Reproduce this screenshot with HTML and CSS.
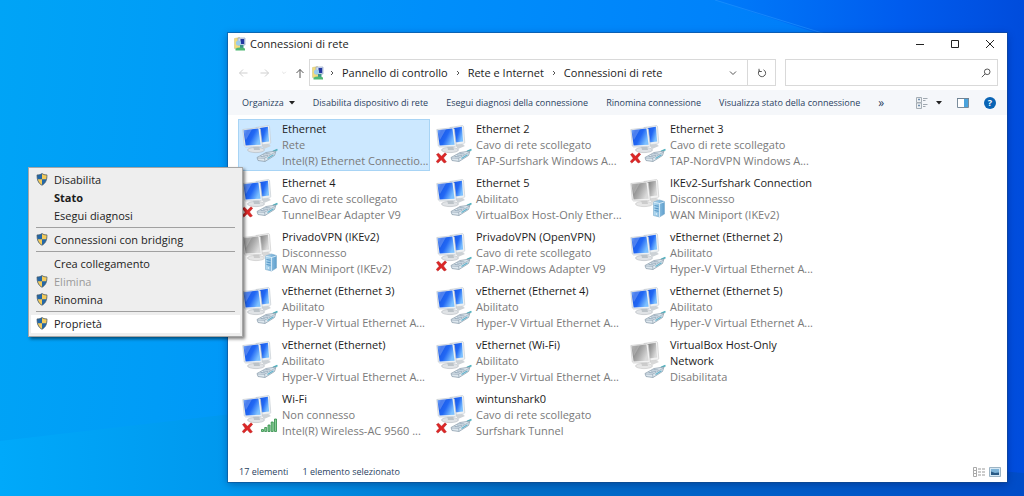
FILE: index.html
```html
<!DOCTYPE html>
<html lang="it">
<head>
<meta charset="utf-8">
<title>Connessioni di rete</title>
<link rel="stylesheet" href="styles.css">
</head>
<body>
<svg class="defs" aria-hidden="true">
  <defs>
    <linearGradient id="g-blue" x1="0" y1="0" x2="1" y2=".5"><stop offset="0" stop-color="#4d92fa"/><stop offset=".25" stop-color="#1a5ae8"/><stop offset=".6" stop-color="#2268f4"/><stop offset="1" stop-color="#7cc0ff"/></linearGradient>
    <linearGradient id="g-gray" x1="0" y1="0" x2="1" y2=".5"><stop offset="0" stop-color="#a5a5a5"/><stop offset=".3" stop-color="#8c8c8c"/><stop offset=".6" stop-color="#a9a9a9"/><stop offset="1" stop-color="#dadada"/></linearGradient>
    <linearGradient id="g-srv" x1="0" y1="0" x2="1" y2="0"><stop offset="0" stop-color="#b5dcf3"/><stop offset="1" stop-color="#5f9fcd"/></linearGradient>
  </defs>
  <symbol id="pc" viewBox="0 0 36 44">
    <path d="M19 24l7-1 3 2-7 3z" fill="#cdd2d6"/>
    <path d="M14 6.500l12.500-2 1 .8 1.300 16.500-1.300 1.200-10 1z" fill="#eef1f3" stroke="#c0c8ce" stroke-width=".6"/>
    <path d="M16 7.300l9.900-1.500 1.200 14.600-8 1z" fill="url(#g-blue)"/>
    <ellipse cx="14" cy="29" rx="8.500" ry="2.600" fill="#e0e3e6" stroke="#b3b9be" stroke-width=".6"/>
    <path d="M11 24.500h6l1 4.500h-6z" fill="#bcc3c8"/>
    <path d="M.8 8.500l16-1.800 1.500 1.200 2 16.500-1.200 1.300-15.500.3-1.300-1z" fill="#eef1f3" stroke="#b8c1c9" stroke-width=".6"/>
    <path d="M1.500 9.300l14.900-1.700 2.200 16.200-15 .6z" fill="url(#g-blue)"/>
    <path d="M1.500 9.300l8.500-1-6.200 11z" fill="#fff" opacity=".22"/>
  </symbol>
  <symbol id="pc-off" viewBox="0 0 36 44">
    <path d="M19 24l7-1 3 2-7 3z" fill="#d8d8d8"/>
    <path d="M14 6.500l12.500-2 1 .8 1.300 16.500-1.300 1.200-10 1z" fill="#f2f2f2" stroke="#c6c6c6" stroke-width=".6"/>
    <path d="M16 7.300l9.900-1.500 1.200 14.600-8 1z" fill="url(#g-gray)"/>
    <ellipse cx="14" cy="29" rx="8.500" ry="2.600" fill="#e6e6e6" stroke="#c2c2c2" stroke-width=".6"/>
    <path d="M11 24.500h6l1 4.500h-6z" fill="#ccc"/>
    <path d="M.8 8.500l16-1.800 1.500 1.200 2 16.500-1.200 1.300-15.500.3-1.300-1z" fill="#f2f2f2" stroke="#c0c0c0" stroke-width=".6"/>
    <path d="M1.500 9.300l14.900-1.700 2.200 16.200-15 .6z" fill="url(#g-gray)"/>
    <path d="M1.500 9.300l8.500-1-6.200 11z" fill="#fff" opacity=".22"/>
  </symbol>
  <symbol id="plug" viewBox="0 0 36 44">
    <path d="M31 30.500l4.500-2" stroke="#4fb0bd" stroke-width="1.800"/>
    <path d="M15 36.500l9-5 10-1.500-1.500 4.500-9.500 6-7-1z" fill="#dde7ee" stroke="#8496a6" stroke-width=".7"/>
    <path d="M15.500 37l7 .3.500 3M22.500 37.300l10.500-6" fill="none" stroke="#93a5b4" stroke-width=".7"/>
    <path d="M18.500 35.500l5 .4M21 34l5 .4M23.500 32.600l5 .4" stroke="#7c93a7" stroke-width=".7"/>
    <path d="M25.500 37.500l6-3.700" stroke="#62b3cc" stroke-width="1.200"/>
  </symbol>
  <symbol id="server" viewBox="0 0 36 44">
    <path d="M23.500 27l6-2 5 1.500v12.500l-5 3-6-1.500z" fill="url(#g-srv)" stroke="#7ba9c9" stroke-width=".6"/>
    <path d="M29.500 28v14M23.500 27.200l6 1.300 5-1.700" fill="none" stroke="#e4f3fb" stroke-width=".8"/>
    <path d="M24.500 30.500l4 .8M24.500 33l4 .8M24.500 35.500l4 .8" stroke="#4a8dbf" stroke-width=".9"/>
    <circle cx="26.500" cy="39" r=".8" fill="#eaf7ff"/>
  </symbol>
  <symbol id="bars" viewBox="0 0 36 44">
    <path d="M19.500 38.500h2v2h-2zM22.700 36.500h2v4h-2zM26 34h2v6.500h-2zM29.200 31h2v9.500h-2zM32.500 28h2v12.500h-2z" fill="#86cf93" stroke="#2f8a48" stroke-width=".8"/>
  </symbol>
  <symbol id="cross" viewBox="0 0 36 44">
    <path d="M.5 33.500l2-1.300 3 3 3.500-3.400 1.700 1.500-3.200 3.600 2.900 4-2.200 1.100-3-3.200-3.300 3.300L.2 40.600l3-3.400z" fill="#dc2626" stroke="#b81c1c" stroke-width=".5"/>
  </symbol>
  <symbol id="shield" viewBox="0 0 12 13">
    <path d="M6 .6c1.500 1 3.200 1.400 5 1.300 0 5-1.200 8.200-5 10.400C2.200 10.100 1 6.900 1 1.900c1.800.1 3.500-.3 5-1.300z" fill="#2467a6"/>
    <path d="M6 .6c1.500 1 3.200 1.400 5 1.300 0 1.600-.1 3-.5 4.300H6zM6 6.200v6.100C3.600 10.900 2.200 9 1.500 6.200z" fill="#f3cb5c"/>
    <path d="M6 .6c1.500 1 3.200 1.400 5 1.300 0 5-1.200 8.200-5 10.400C2.200 10.100 1 6.900 1 1.900c1.800.1 3.500-.3 5-1.300z" fill="none" stroke="#4b5a66" stroke-width=".7"/>
  </symbol>
  <symbol id="netfolder" viewBox="0 0 14 14">
    <path d="M1.500 1.500l5-1 1 1v9l-6 1z" fill="#f1dc7c" stroke="#d3c06e" stroke-width=".5"/>
    <path d="M5 1h7v7H5z" fill="#d3def0" stroke="#93a5c4" stroke-width=".7"/>
    <path d="M7.500 2h3.700v5H7.500z" fill="#2238a0"/>
    <circle cx="5.500" cy="6" r="2.600" fill="#9ccbea"/>
    <path d="M7 8h3.500v3H7z" fill="#3c9488"/>
    <path d="M2.500 11.500c3-1.500 7-1.500 9.500 0v2h-9.500z" fill="#4fb873"/>
  </symbol>
</svg>

<main class="desktop">
  <svg class="wallpaper" viewBox="0 0 1024 496" preserveAspectRatio="none" aria-hidden="true">
    <defs>
      <linearGradient id="beam" x1="0" y1="0" x2="1" y2="0"><stop offset="0" stop-color="#007cfa"/><stop offset=".6" stop-color="#005cee"/><stop offset="1" stop-color="#004cdc"/></linearGradient>
      <linearGradient id="low" x1="0" y1="0" x2="1" y2="0"><stop offset="0" stop-color="#00a9fa"/><stop offset=".22" stop-color="#0098ee"/><stop offset=".5" stop-color="#0070c8"/><stop offset="1" stop-color="#004cc8"/></linearGradient>
    </defs>
    <path d="M715 0h309v496H960V80z" fill="url(#beam)"/>
    <path d="M715 0l130 40" stroke="#2a9cff" stroke-opacity=".5" fill="none"/>
    <path d="M0 441l240-28 784 60v23H0z" fill="url(#low)"/>
  </svg>

  <section class="window" aria-label="Connessioni di rete">
    <header class="titlebar">
      <svg class="ico14"><use href="#netfolder"/></svg>
      <h1 class="title">Connessioni di rete</h1>
      <div class="controls">
        <button class="ctl" aria-label="Riduci a icona"><svg viewBox="0 0 10 10"><path d="M1 5.500h8"/></svg></button>
        <button class="ctl" aria-label="Ingrandisci"><svg viewBox="0 0 10 10"><path d="M1.500 1.500h7v7h-7z"/></svg></button>
        <button class="ctl" aria-label="Chiudi"><svg viewBox="0 0 10 10"><path d="M1 1l8 8M9 1L1 9"/></svg></button>
      </div>
    </header>

    <nav class="navbar" aria-label="Navigazione">
      <div class="history">
        <button class="hist dim" aria-label="Indietro"><svg viewBox="0 0 10 10"><path d="M9.500 5h-8M5 1.500L1.500 5 5 8.500"/></svg></button>
        <button class="hist dim" aria-label="Avanti"><svg viewBox="0 0 10 10"><path d="M.5 5h8M5 1.500L8.500 5 5 8.500"/></svg></button>
        <button class="hist dim small" aria-label="Percorsi recenti"><svg viewBox="0 0 10 10"><path d="M2 3l3 3 3-3"/></svg></button>
        <button class="hist up" aria-label="Su"><svg viewBox="0 0 10 10"><path d="M5 10V1.500M1.500 5L5 1.500 8.500 5"/></svg></button>
      </div>
      <div class="address">
        <svg class="ico14"><use href="#netfolder"/></svg>
        <svg class="chev" viewBox="0 0 6 8"><path d="M2 2l2 2-2 2"/></svg>
        <a class="crumb" href="#">Pannello di controllo</a>
        <svg class="chev" viewBox="0 0 6 8"><path d="M2 2l2 2-2 2"/></svg>
        <a class="crumb" href="#">Rete e Internet</a>
        <svg class="chev" viewBox="0 0 6 8"><path d="M2 2l2 2-2 2"/></svg>
        <a class="crumb" href="#">Connessioni di rete</a>
        <button class="drop" aria-label="Percorsi precedenti"><svg viewBox="0 0 10 10"><path d="M2 3.500l3 3 3-3"/></svg></button>
        <button class="refresh" aria-label="Aggiorna"><svg viewBox="0 0 10 10"><path d="M6.500 1.800A3.600 3.600 0 1 1 2.500 2.500M2 .8v2.700h2.800"/></svg></button>
      </div>
      <label class="search">
        <input type="search" aria-label="Cerca in Connessioni di rete">
        <svg viewBox="0 0 10 10"><circle cx="6.200" cy="3.800" r="2.800"/><path d="M4.200 5.800L.8 9.200"/></svg>
      </label>
    </nav>

    <div class="toolbar" role="toolbar">
      <button class="cmd">Organizza <svg class="tri" viewBox="0 0 6 4"><path d="M0 0h6L3 3.500z"/></svg></button>
      <button class="cmd">Disabilita dispositivo di rete</button>
      <button class="cmd">Esegui diagnosi della connessione</button>
      <button class="cmd">Rinomina connessione</button>
      <button class="cmd">Visualizza stato della connessione</button>
      <button class="cmd more" aria-label="Altri comandi">»</button>
      <div class="tools">
        <button class="cmd view" aria-label="Cambia visualizzazione">
          <svg class="ico12" viewBox="0 0 12 12"><path d="M.5.500h5v5h-5zM.5 6h5v5.500h-5z" fill="#eef1f3" stroke="#a5adb4"/><path d="M2 2.500h2M2 8.500h2" stroke="#6f8fb0" stroke-width="1.500"/><path d="M7 1.500h4.500M7 3.500h2.500M7 7.500h4.500M7 9.500h2.500" stroke="#a0a8b0"/></svg>
          <svg class="tri" viewBox="0 0 6 4"><path d="M0 0h6L3 3.500z"/></svg>
        </button>
        <button class="cmd" aria-label="Riquadro di anteprima"><svg class="ico12" viewBox="0 0 12 12"><path d="M.5 1.500h11v9H.5z" fill="#fff" stroke="#7b8d9c"/><path d="M7 2h4v8H7z" fill="#4ba3dc"/><path d="M0 1.500h12" stroke="#708494"/></svg></button>
        <button class="cmd" aria-label="Guida"><span class="help">?</span></button>
      </div>
    </div>

    <ul class="list">
      <li class="item selected"><svg class="net"><use href="#pc"/><use href="#plug"/></svg><div class="text"><p class="name">Ethernet</p><p>Rete</p><p>Intel(R) Ethernet Connectio...</p></div></li>
      <li class="item"><svg class="net"><use href="#pc"/><use href="#plug"/><use href="#cross"/></svg><div class="text"><p class="name">Ethernet 2</p><p>Cavo di rete scollegato</p><p>TAP-Surfshark Windows A...</p></div></li>
      <li class="item"><svg class="net"><use href="#pc"/><use href="#plug"/><use href="#cross"/></svg><div class="text"><p class="name">Ethernet 3</p><p>Cavo di rete scollegato</p><p>TAP-NordVPN Windows A...</p></div></li>
      <li class="item"><svg class="net"><use href="#pc"/><use href="#plug"/><use href="#cross"/></svg><div class="text"><p class="name">Ethernet 4</p><p>Cavo di rete scollegato</p><p>TunnelBear Adapter V9</p></div></li>
      <li class="item"><svg class="net"><use href="#pc"/><use href="#plug"/></svg><div class="text"><p class="name">Ethernet 5</p><p>Abilitato</p><p>VirtualBox Host-Only Ether...</p></div></li>
      <li class="item"><svg class="net"><use href="#pc-off"/><use href="#server"/></svg><div class="text"><p class="name">IKEv2-Surfshark Connection</p><p>Disconnesso</p><p>WAN Miniport (IKEv2)</p></div></li>
      <li class="item"><svg class="net"><use href="#pc-off"/><use href="#server"/></svg><div class="text"><p class="name">PrivadoVPN (IKEv2)</p><p>Disconnesso</p><p>WAN Miniport (IKEv2)</p></div></li>
      <li class="item"><svg class="net"><use href="#pc"/><use href="#plug"/><use href="#cross"/></svg><div class="text"><p class="name">PrivadoVPN (OpenVPN)</p><p>Cavo di rete scollegato</p><p>TAP-Windows Adapter V9</p></div></li>
      <li class="item"><svg class="net"><use href="#pc"/><use href="#plug"/></svg><div class="text"><p class="name">vEthernet (Ethernet 2)</p><p>Abilitato</p><p>Hyper-V Virtual Ethernet A...</p></div></li>
      <li class="item"><svg class="net"><use href="#pc"/><use href="#plug"/></svg><div class="text"><p class="name">vEthernet (Ethernet 3)</p><p>Abilitato</p><p>Hyper-V Virtual Ethernet A...</p></div></li>
      <li class="item"><svg class="net"><use href="#pc"/><use href="#plug"/></svg><div class="text"><p class="name">vEthernet (Ethernet 4)</p><p>Abilitato</p><p>Hyper-V Virtual Ethernet A...</p></div></li>
      <li class="item"><svg class="net"><use href="#pc"/><use href="#plug"/></svg><div class="text"><p class="name">vEthernet (Ethernet 5)</p><p>Abilitato</p><p>Hyper-V Virtual Ethernet A...</p></div></li>
      <li class="item"><svg class="net"><use href="#pc"/><use href="#plug"/></svg><div class="text"><p class="name">vEthernet (Ethernet)</p><p>Abilitato</p><p>Hyper-V Virtual Ethernet A...</p></div></li>
      <li class="item"><svg class="net"><use href="#pc"/><use href="#plug"/></svg><div class="text"><p class="name">vEthernet (Wi-Fi)</p><p>Abilitato</p><p>Hyper-V Virtual Ethernet A...</p></div></li>
      <li class="item"><svg class="net"><use href="#pc-off"/><use href="#plug"/></svg><div class="text"><p class="name">VirtualBox Host-Only<br>Network</p><p>Disabilitata</p></div></li>
      <li class="item"><svg class="net"><use href="#pc"/><use href="#bars"/><use href="#cross"/></svg><div class="text"><p class="name">Wi-Fi</p><p>Non connesso</p><p>Intel(R) Wireless-AC 9560 ...</p></div></li>
      <li class="item"><svg class="net"><use href="#pc"/><use href="#plug"/><use href="#cross"/></svg><div class="text"><p class="name">wintunshark0</p><p>Cavo di rete scollegato</p><p>Surfshark Tunnel</p></div></li>
    </ul>

    <footer class="status">
      <span>17 elementi</span>
      <span>1 elemento selezionato</span>
      <div class="modes">
        <button class="mode" aria-label="Dettagli"><svg class="ico12" viewBox="0 0 12 12"><path d="M.5 1.500h3v3h-3zM.5 4.500h3v3h-3zM.5 7.500h3v3h-3z" fill="#fff" stroke="#a8a8a8"/><path d="M5 3h3M9 3h3M5 6h3M9 6h3M5 9h3M9 9h3" stroke="#999"/></svg></button>
        <button class="mode" aria-label="Icone grandi"><svg class="ico12" viewBox="0 0 12 12"><path d="M.5 1.500h11v9H.5z" fill="#d5e8f5" stroke="#9db4c4"/><path d="M2 3h8v6H2z" fill="#7fb4d8"/><path d="M2 9V5.500l4 1.500 4-.5V9z" fill="#2a5a84"/></svg></button>
      </div>
    </footer>
  </section>

  <div class="menu" role="menu">
    <button class="entry" role="menuitem"><svg><use href="#shield"/></svg>Disabilita</button>
    <button class="entry default" role="menuitem">Stato</button>
    <button class="entry" role="menuitem">Esegui diagnosi</button>
    <hr>
    <button class="entry" role="menuitem"><svg><use href="#shield"/></svg>Connessioni con bridging</button>
    <hr>
    <button class="entry" role="menuitem">Crea collegamento</button>
    <button class="entry" role="menuitem" disabled><svg><use href="#shield"/></svg>Elimina</button>
    <button class="entry" role="menuitem"><svg><use href="#shield"/></svg>Rinomina</button>
    <hr>
    <button class="entry active" role="menuitem"><svg><use href="#shield"/></svg>Proprietà</button>
  </div>
</main>
</body>
</html>
```
FILE: styles.css
```css
* {
  box-sizing: border-box;
}

body,
h1,
p,
ul {
  margin: 0;
  padding: 0;
}

body,
button,
input {
  font-family: "Open Sans", "Noto Sans", sans-serif;
  font-size: 11px;
  line-height: 16px;
  color: #1c1c1c;
}

button {
  margin: 0;
  padding: 0;
  border: 0;
  background: none;
}

svg {
  display: block;
  flex: none;
}

.defs {
  position: absolute;
  width: 0;
  height: 0;
}

.desktop {
  position: relative;
  display: flex;
  min-height: 100vh;
  padding: 33px 17px 14px 228px;
  background: linear-gradient(95deg, #00a4f6 0%, #009cf7 18%, #008ffa 40%, #0082fa 68%, #0070f5 100%);
}

.wallpaper {
  position: absolute;
  inset: 0;
  width: 100%;
  height: 100%;
}

.window {
  position: relative;
  flex: 1;
  min-width: 0;
  display: flex;
  flex-direction: column;
  background: #fff;
  box-shadow: 0 0 0 1px rgba(20, 70, 130, .5), 0 2px 8px rgba(0, 20, 80, .4);
}

.ico14 {
  width: 14px;
  height: 14px;
}

.ico12 {
  width: 12px;
  height: 12px;
}

/* Title bar */
.titlebar {
  display: flex;
  align-items: center;
  height: 22px;
  padding-left: 5px;
  gap: 3px;
}

.title {
  font-size: 11px;
  font-weight: 400;
}

.controls {
  display: flex;
  margin-left: auto;
}

.ctl {
  display: grid;
  place-items: center;
  width: 35px;
  height: 22px;
}

.ctl svg {
  width: 10px;
  height: 10px;
  fill: none;
  stroke: #222;
}

/* Address row */
.navbar {
  display: flex;
  align-items: center;
  padding: 4px 9px 4px 4px;
}

.history {
  display: flex;
  align-items: center;
  width: 77px;
}

.hist {
  display: grid;
  place-items: center;
  width: 22px;
}

.hist svg,
.drop svg,
.refresh svg,
.search svg {
  width: 10px;
  height: 10px;
  fill: none;
  stroke: #555;
}

.hist.dim svg {
  stroke: #cfcfcf;
}

.hist.small,
.hist.up {
  width: 16px;
}

.hist.small svg {
  width: 6px;
}

.address {
  flex: 1;
  min-width: 0;
  display: flex;
  align-items: center;
  height: 27px;
  padding-left: 1px;
  border: 1px solid #d9d9d9;
}

.chev {
  width: 6px;
  height: 8px;
  margin: 0 7px 0 4px;
  fill: none;
  stroke: #555;
}

.crumb {
  padding-right: 3px;
  color: inherit;
  text-decoration: none;
  white-space: nowrap;
}

.drop {
  display: grid;
  place-items: center;
  width: 28px;
  margin-left: auto;
}

.refresh {
  display: grid;
  place-items: center;
  align-self: stretch;
  width: 28px;
  border-left: 1px solid #d9d9d9;
}

.search {
  display: flex;
  align-items: center;
  width: 213px;
  height: 27px;
  margin-left: 9px;
  padding-right: 6px;
  border: 1px solid #d9d9d9;
}

.search input {
  flex: 1;
  min-width: 0;
  border: 0;
  outline: 0;
  background: none;
}

/* Command bar */
.toolbar {
  display: flex;
  align-items: center;
  gap: 18px;
  height: 25px;
  padding: 0 11px 0 14px;
  background: #f5f7fa;
}

.cmd {
  display: flex;
  align-items: center;
  gap: 5px;
  font-size: 9px;
  color: #2a3f5f;
  white-space: nowrap;
}

.more {
  font-size: 12px;
}

.tri {
  width: 6px;
  height: 4px;
  fill: #222;
}

.tools {
  display: flex;
  align-items: center;
  gap: 15px;
  margin-left: auto;
}

.view {
  gap: 8px;
}

.help {
  width: 12px;
  height: 12px;
  border-radius: 50%;
  background: #0a64b4;
  color: #fff;
  font-size: 9px;
  font-weight: 700;
  line-height: 12px;
  text-align: center;
}

/* Connections */
.list {
  flex: 1;
  display: grid;
  grid-template-columns: repeat(auto-fill, 192px);
  grid-auto-rows: 52px;
  align-content: start;
  gap: 2px;
  padding: 4px 10px;
  list-style: none;
}

.item {
  display: flex;
  gap: 4px;
  padding: 1px 3px;
  border: 1px solid transparent;
}

.selected {
  background: #cce8ff;
  border-color: #a8d4f5;
}

.net {
  width: 36px;
  height: 44px;
}

.text {
  color: #7a7a7a;
  white-space: nowrap;
}

.text .name {
  color: #1c1c1c;
}

/* Status bar */
.status {
  display: flex;
  align-items: center;
  gap: 14px;
  height: 20px;
  padding: 0 6px 0 11px;
  font-size: 9px;
  color: #2a3f5f;
}

.modes {
  display: flex;
  gap: 4px;
  margin-left: auto;
}

/* Context menu */
.menu {
  position: absolute;
  left: 28px;
  top: 167px;
  width: 215px;
  padding: 3px 2px;
  border: 1px solid #a6a6a6;
  background: #eee;
  box-shadow: 2px 2px 3px rgba(0, 0, 0, .5);
}

.entry {
  position: relative;
  display: block;
  width: 100%;
  height: 18px;
  padding-left: 23px;
  line-height: 18px;
  text-align: left;
}

.entry svg {
  position: absolute;
  left: 5px;
  top: 2px;
  width: 12px;
  height: 13px;
}

.entry:disabled {
  color: #9a9a9a;
}

.default {
  font-weight: 700;
}

.active {
  background: #fff;
}

.menu hr {
  height: 1px;
  margin: 2px 5px 3px;
  border: 0;
  background: #a0a0a0;
}
```
